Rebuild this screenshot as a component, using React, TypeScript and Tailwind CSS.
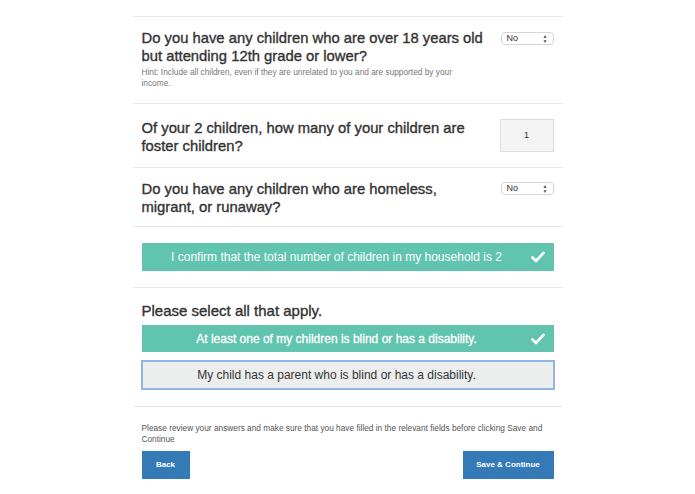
import React from "react";

const font = { fontFamily: '"Liberation Sans", Arial, sans-serif' };

function Check() {
  return (
    <svg width="14" height="12" viewBox="0 0 14 12" className="shrink-0">
      <path d="M1.5 6.5 L5 10 L12.5 1.8" fill="none" stroke="white" strokeWidth="2.6" strokeLinecap="round" strokeLinejoin="round" />
    </svg>
  );
}

function SelectNo() {
  return (
    <div className="flex h-[13px] w-[53px] items-center justify-between rounded-[4px] border border-[#d6d6d6] bg-white px-[5px] text-[9px] text-[#333]">
      <span>No</span>
      <span className="flex flex-col text-[5px] leading-[5px] text-[#555]">
        <span>▲</span>
        <span>▼</span>
      </span>
    </div>
  );
}

function Divider() {
  return <div className="h-px w-full bg-[#e8e8e8]" />;
}

const heading = "text-[14.8px] leading-[18px] font-normal text-[#333] [-webkit-text-stroke:0.35px_#333]";

export default function App() {
  return (
    <div className="min-h-[494px] w-full bg-white" style={font}>
      <div className="mx-auto w-[430px] pt-[16px]">
        <Divider />
        <div className="flex items-start justify-between px-[9px] pt-[12px] pb-[14px]">
          <div className="w-[350px]">
            <h2 className={heading}>
              Do you have any children who are over 18 years old but attending 12th grade or lower?
            </h2>
            <p className="mt-[2px] w-[328px] text-[8.3px] leading-[11px] text-[#777]">
              Hint: Include all children, even if they are unrelated to you and are supported by your income.
            </p>
          </div>
          <div className="pt-[3px]">
            <SelectNo />
          </div>
        </div>
        <Divider />
        <div className="flex items-start justify-between px-[9px] pt-[15px] pb-[12px]">
          <h2 className={`w-[350px] ${heading}`}>
            Of your 2 children, how many of your children are foster children?
          </h2>
          <div className="flex h-[33px] w-[54px] items-center justify-center border border-[#ddd] bg-[#f4f4f4] text-[9px] text-[#333]">
            1
          </div>
        </div>
        <Divider />
        <div className="flex items-start justify-between px-[9px] pt-[12px] pb-[10px]">
          <h2 className={`w-[350px] ${heading}`}>
            Do you have any children who are homeless, migrant, or runaway?
          </h2>
          <div className="pt-[2px]">
            <SelectNo />
          </div>
        </div>
        <Divider />
        <div className="px-[9px] pt-[16px] pb-[16px]">
          <div className="relative flex h-[28px] items-center justify-center bg-[#60c4ae] pr-[22px] text-[12px] text-white">
            <span>I confirm that the total number of children in my household is 2</span>
            <span className="absolute right-[9px]">
              <Check />
            </span>
          </div>
        </div>
        <Divider />
        <div className="px-[9px] pt-[14px] pb-[16px]">
          <h3 className="text-[15px] leading-[18px] font-normal text-[#333] [-webkit-text-stroke:0.35px_#333]">
            Please select all that apply.
          </h3>
          <div className="relative mt-[5px] flex h-[27px] items-center justify-center bg-[#60c4ae] pr-[22px] text-[12px] text-white [-webkit-text-stroke:0.3px_white]">
            <span>At least one of my children is blind or has a disability.</span>
            <span className="absolute right-[9px]">
              <Check />
            </span>
          </div>
          <div className="-mx-px mt-[8px] flex h-[30px] items-center justify-center border-2 border-[#8fb4e6] bg-[#eceeee] pr-[22px] text-[12px] text-[#333]">
            My child has a parent who is blind or has a disability.
          </div>
        </div>
        <Divider />
        <div className="px-[9px] pt-[16px]">
          <p className="w-[405px] text-[8.3px] leading-[11px] text-[#555]">
            Please review your answers and make sure that you have filled in the relevant fields before clicking Save and Continue
          </p>
          <div className="mt-[6px] flex justify-between">
            <button className="h-[28px] w-[48px] bg-[#337ab7] text-[8px] font-semibold text-white">Back</button>
            <button className="h-[28px] w-[91px] bg-[#337ab7] text-[8px] font-semibold text-white">Save &amp; Continue</button>
          </div>
        </div>
      </div>
    </div>
  );
}
